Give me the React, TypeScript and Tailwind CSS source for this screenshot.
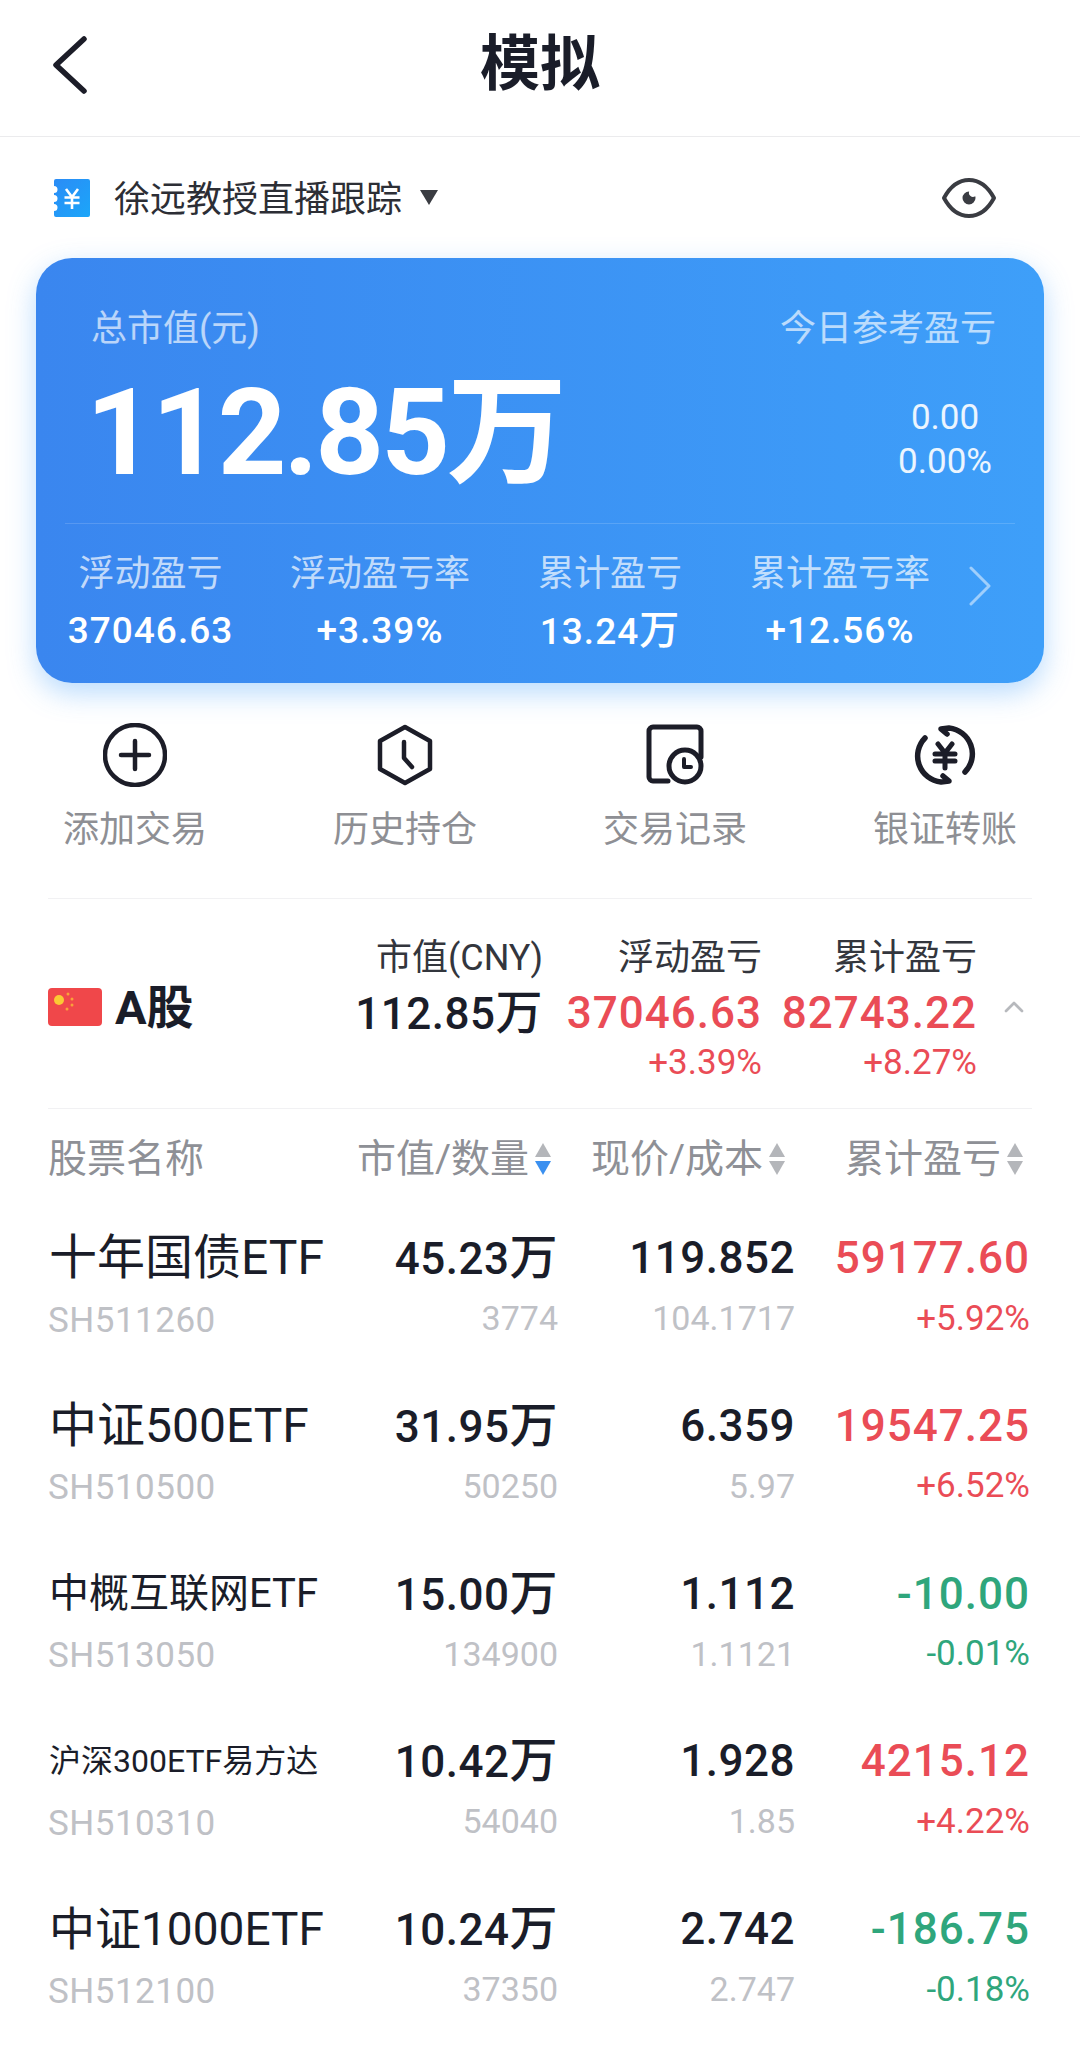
import { ChevronUp } from "lucide-react"

const FONT = "font-['Roboto','Noto_Sans_CJK_SC',sans-serif]"

const RED = "text-[#ea4c56]"
const GREEN = "text-[#2fa67c]"

const stats = [
  { label: "浮动盈亏", value: "37046.63" },
  { label: "浮动盈亏率", value: "+3.39%" },
  { label: "累计盈亏", value: "13.24", unit: "万" },
  { label: "累计盈亏率", value: "+12.56%" },
]

const rows = [
  { name: "十年国债ETF", size: "text-[48px]", code: "SH511260", cap: "45.23", qty: "3774", price: "119.852", cost: "104.1717", pl: "59177.60", pct: "+5.92%", up: true },
  { name: "中证500ETF", size: "text-[48px]", code: "SH510500", cap: "31.95", qty: "50250", price: "6.359", cost: "5.97", pl: "19547.25", pct: "+6.52%", up: true },
  { name: "中概互联网ETF", size: "text-[40px]", code: "SH513050", cap: "15.00", qty: "134900", price: "1.112", cost: "1.1121", pl: "-10.00", pct: "-0.01%", up: false },
  { name: "沪深300ETF易方达", size: "text-[32px]", code: "SH510310", cap: "10.42", qty: "54040", price: "1.928", cost: "1.85", pl: "4215.12", pct: "+4.22%", up: true },
  { name: "中证1000ETF", size: "text-[46px]", code: "SH512100", cap: "10.24", qty: "37350", price: "2.742", cost: "2.747", pl: "-186.75", pct: "-0.18%", up: false },
]

function LedgerIcon() {
  return (
    <svg width="38" height="40" viewBox="0 0 38 40">
      <defs>
        <linearGradient id="ledger" x1="0" y1="0" x2="1" y2="1">
          <stop offset="0" stopColor="#2b8cf6" />
          <stop offset="1" stopColor="#1ba6f9" />
        </linearGradient>
      </defs>
      <path
        d="M3 1h32a2 2 0 0 1 2 2v34a2 2 0 0 1-2 2H3a2 2 0 0 1-2-2v-4a3.5 3.5 0 0 0 0-7v-2a3.5 3.5 0 0 0 0-7v-2a3.5 3.5 0 0 0 0-7V3a2 2 0 0 1 2-2z"
        fill="url(#ledger)"
      />
      <path d="M13 11l6 8 6-8M11.5 19.5h15M11.5 25h15M19 19v12" fill="none" stroke="#fff" strokeWidth="2.6" />
    </svg>
  )
}

function EyeIcon() {
  return (
    <svg width="56" height="42" viewBox="0 0 56 42" fill="none">
      <path d="M3 21C10 8 19 3 28 3s18 5 25 18c-7 13-16 18-25 18S10 34 3 21z" stroke="#3a3c42" strokeWidth="4" strokeLinejoin="round" />
      <path d="M28 14.500a6.500 6.500 0 1 0 6.500 6.500c0-.8-.1-1.300-.3-1.800a4 4 0 0 1-6-4.700z" fill="#3a3c42" />
    </svg>
  )
}

function BackIcon() {
  return (
    <svg width="38" height="58" viewBox="0 0 38 58" fill="none" stroke="#1c1d28" strokeWidth="5.500" strokeLinecap="round" strokeLinejoin="round">
      <path d="M33 3 5 29l28 26" />
    </svg>
  )
}

function MoreIcon() {
  return (
    <svg width="22" height="40" viewBox="0 0 22 40" fill="none" stroke="#ffffff" strokeOpacity="0.5" strokeWidth="3" strokeLinecap="round" strokeLinejoin="round">
      <path d="M2 2l18 18L2 38" />
    </svg>
  )
}

function PlusIcon() {
  return (
    <svg width="64" height="64" viewBox="0 0 64 64" fill="none" stroke="#1c1d28" strokeWidth="4.500" strokeLinecap="round">
      <circle cx="32" cy="32" r="30" />
      <path d="M18 32h28M32 18v28" />
    </svg>
  )
}

function HistoryIcon() {
  return (
    <svg width="64" height="64" viewBox="0 0 64 64" fill="none" stroke="#1c1d28" strokeWidth="4.500" strokeLinecap="round" strokeLinejoin="round">
      <path d="M32 4l25 14v28L32 60 7 46V18z" />
      <path d="M31 19v16l8 9" />
    </svg>
  )
}

function RecordIcon() {
  return (
    <svg width="64" height="64" viewBox="0 0 64 64" fill="none" stroke="#1c1d28" strokeWidth="5" strokeLinecap="round" strokeLinejoin="round">
      <path d="M25 58H10a4 4 0 0 1-4-4V8a4 4 0 0 1 4-4h44a4 4 0 0 1 4 4v26" />
      <circle cx="42" cy="43" r="16" />
      <path d="M41 36v8h7" strokeWidth="4" />
    </svg>
  )
}

function TransferIcon() {
  return (
    <svg width="64" height="64" viewBox="0 0 64 64" fill="none" stroke="#1c1d28" strokeWidth="5.500" strokeLinecap="round" strokeLinejoin="round">
      <path d="M12 15a26 26 0 0 0 16 44l8-1-6-5" />
      <path d="M52 49a26 26 0 0 0-16-44l-8 1 6 5" />
      <path d="M25 21l7 9 7-9M22 31h20M22 38h20M32 31v14" strokeWidth="5" />
    </svg>
  )
}

const actions = [
  { label: "添加交易", icon: PlusIcon },
  { label: "历史持仓", icon: HistoryIcon },
  { label: "交易记录", icon: RecordIcon },
  { label: "银证转账", icon: TransferIcon },
]

function FlagIcon() {
  return (
    <svg width="54" height="38" viewBox="0 0 54 38">
      <rect width="54" height="38" rx="4" fill="#f0474a" />
      <circle cx="11" cy="12" r="5" fill="#fbc934" />
      <circle cx="20" cy="6" r="1.500" fill="#f9a13a" />
      <circle cx="24" cy="11" r="1.500" fill="#f9a13a" />
      <circle cx="24" cy="17" r="1.500" fill="#f9a13a" />
      <circle cx="19" cy="21" r="1.500" fill="#f9a13a" />
    </svg>
  )
}

function SortArrows({ active }: { active?: boolean }) {
  return (
    <span className="flex flex-col gap-[4px] ml-[6px]">
      <span className="w-0 h-0 border-x-[8px] border-x-transparent border-b-[14px] border-b-[#b4b6ba]" />
      <span className={`w-0 h-0 border-x-[8px] border-x-transparent border-t-[14px] ${active ? "border-t-[#3b90f0]" : "border-t-[#b4b6ba]"}`} />
    </span>
  )
}

export default function App() {
  return (
    <div className={`${FONT} w-[1080px] h-[2067px] bg-white overflow-hidden text-[#1a1d29]`}>
      {/* Nav bar */}
      <div className="relative h-[137px] flex items-center justify-center border-b border-[#ebebed]">
        <span className="absolute left-[51px] top-[36px]">
          <BackIcon />
        </span>
        <h1 className="text-[60px] font-bold leading-none pb-[6px]">模拟</h1>
      </div>

      {/* Account */}
      <div className="h-[121px] flex items-center pl-[53px] pr-[83px]">
        <LedgerIcon />
        <span className="ml-[23px] text-[36px] leading-none text-[#2c2e35] pt-[4px]">徐远教授直播跟踪</span>
        <span className="ml-[18px] w-0 h-0 border-x-[9px] border-x-transparent border-t-[15px] border-t-[#3a3c42]" />
        <span className="ml-auto">
          <EyeIcon />
        </span>
      </div>

      {/* Asset card */}
      <div className="mx-[36px] h-[425px] rounded-[36px] bg-gradient-to-r from-[#3a86ef] to-[#3e9ff9] shadow-[0_10px_28px_rgba(70,160,250,0.38)] text-white">
        <div className="h-[265px] pl-[55px] pr-[48px] pt-[50px] flex justify-between">
          <div>
            <div className="text-[36px] leading-[42px] text-white/65">总市值(元)</div>
            <div className="mt-[23px] -ml-[5px] text-[120px] font-bold leading-[120px] tracking-[-3px] whitespace-nowrap">112.85万</div>
          </div>
          <div className="flex flex-col items-end">
            <div className="text-[36px] leading-[42px] text-white/65">今日参考盈亏</div>
            <div className="mt-[46px] w-[100px] text-center mr-[1px] text-[35px] leading-[44px] text-white/90">
              <div>0.00</div>
              <div className="-mx-[6px]">0.00%</div>
            </div>
          </div>
        </div>
        <div className="mx-[29px] h-px bg-white/15" />
        <div className="relative pt-[26px] grid grid-cols-[229px_230px_230px_230px]">
          {stats.map((s) => (
            <div key={s.label} className="flex flex-col items-center">
              <span className="text-[36px] leading-[48px] text-white/70">{s.label}</span>
              <span className="mt-[9px] text-[37px] font-medium leading-[48px] tracking-[1px] whitespace-nowrap">
                {s.value}
                {s.unit && <span className="text-[40px]">{s.unit}</span>}
              </span>
            </div>
          ))}
          <span className="absolute left-[933px] top-[42px]">
            <MoreIcon />
          </span>
        </div>
      </div>

      {/* Actions */}
      <div className="h-[215px] pt-[40px] grid grid-cols-4">
        {actions.map((a) => (
          <div key={a.label} className="flex flex-col items-center">
            <a.icon />
            <span className="mt-[18px] text-[36px] leading-[50px] text-[#8e8f94]">{a.label}</span>
          </div>
        ))}
      </div>

      {/* Summary */}
      <div className="mx-[48px] h-[211px] border-y border-[#f1f1f3] pt-[40px] flex">
        <div className="w-[250px] h-[138px] pb-[2px] flex items-center">
          <FlagIcon />
          <span className="ml-[13px] text-[47px] font-bold leading-none">A股</span>
        </div>
        <div className="w-[245px] text-right">
          <div className="text-[36px] leading-[38px] text-[#33363d]">市值(CNY)</div>
          <div className="mt-[8px] text-[44px] font-medium leading-[56px] tracking-[0.500px] whitespace-nowrap">
            112.85<span className="text-[47px]">万</span>
          </div>
        </div>
        <div className="w-[219px] text-right">
          <div className="text-[36px] leading-[38px] text-[#33363d]">浮动盈亏</div>
          <div className={`mt-[8px] text-[44px] font-medium leading-[56px] tracking-[1px] ${RED}`}>37046.63</div>
          <div className={`mt-[2px] text-[35px] leading-[40px] ${RED}`}>+3.39%</div>
        </div>
        <div className="w-[215px] text-right">
          <div className="text-[36px] leading-[38px] text-[#33363d]">累计盈亏</div>
          <div className={`mt-[8px] text-[44px] font-medium leading-[56px] tracking-[1px] ${RED}`}>82743.22</div>
          <div className={`mt-[2px] text-[35px] leading-[40px] ${RED}`}>+8.27%</div>
        </div>
        <div className="flex-1 h-[138px] pb-[2px] flex items-center justify-end">
          <ChevronUp className="text-[#b7b9bd] mr-[2px]" size={32} strokeWidth={2} />
        </div>
      </div>

      {/* Column headers */}
      <div className="h-[100px] pl-[48px] grid grid-cols-[280px_230px_237px_235px] items-center text-[39px] leading-none text-[#8e9096]">
        <span>股票名称</span>
        <div className="flex items-center justify-end pr-[7px]">
          市值/数量
          <SortArrows active />
        </div>
        <div className="flex items-center justify-end pr-[10px]">
          现价/成本
          <SortArrows />
        </div>
        <div className="flex items-center justify-end pr-[7px]">
          累计盈亏
          <SortArrows />
        </div>
      </div>

      {/* Rows */}
      {rows.map((r) => (
        <div key={r.code} className="h-[167.8px] pt-[19px] pl-[48px] grid grid-cols-[280px_230px_237px_235px] grid-rows-[60px_60px] gap-y-[2px] items-center">
          <span className={`${r.size} leading-none pl-[1px] whitespace-nowrap`}>{r.name}</span>
          <span className="text-right text-[44px] font-medium leading-none tracking-[0.500px] whitespace-nowrap">
            {r.cap}
            <span className="text-[48px] leading-none">万</span>
          </span>
          <span className="text-right text-[44px] font-medium leading-none tracking-[0.500px]">{r.price}</span>
          <span className={`text-right text-[44px] font-medium leading-none tracking-[1px] ${r.up ? RED : GREEN}`}>{r.pl}</span>
          <span className="text-[35px] leading-none tracking-[0.500px] text-[#bfc1c6]">{r.code}</span>
          <span className="text-right text-[34px] leading-none text-[#bfc1c6] pb-[4px]">{r.qty}</span>
          <span className="text-right text-[34px] leading-none text-[#bfc1c6] pb-[4px]">{r.cost}</span>
          <span className={`text-right text-[35px] leading-none pb-[4px] ${r.up ? RED : GREEN}`}>{r.pct}</span>
        </div>
      ))}
    </div>
  )
}
